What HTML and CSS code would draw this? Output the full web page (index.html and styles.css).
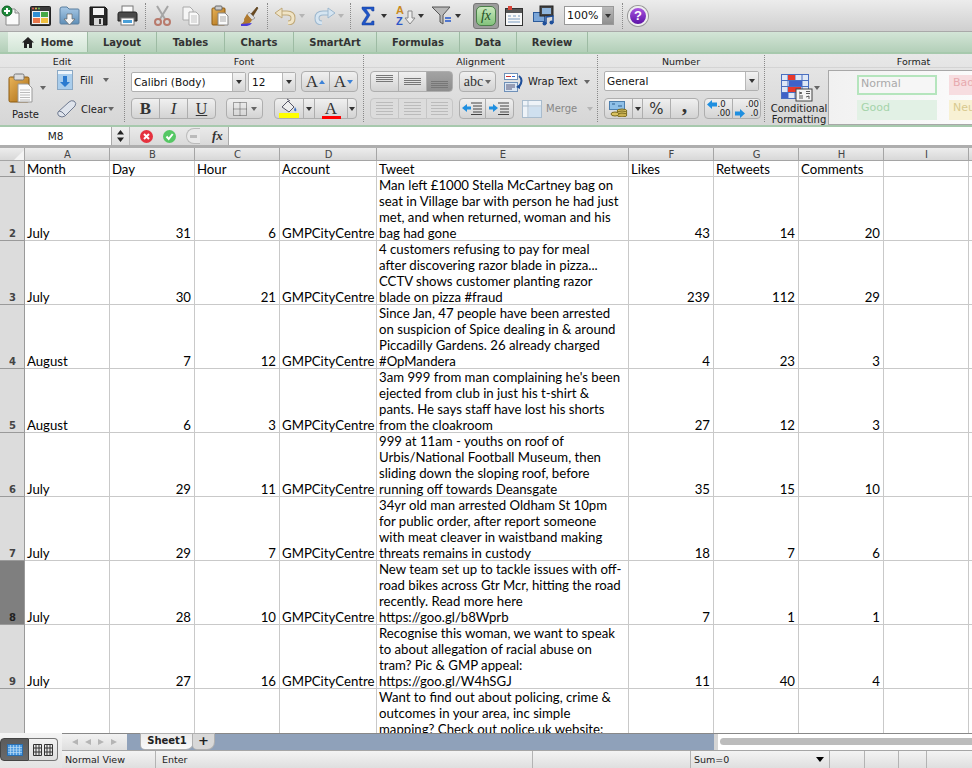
FILE: index.html
```html
<!DOCTYPE html>
<html lang="en">
<head>
<meta charset="utf-8">
<title>Sheet1</title>
<link rel="stylesheet" href="styles.css">
</head>
<body>
<svg class="defs" aria-hidden="true"><defs>
<linearGradient id="gClip" x1="0" y1="0" x2="1" y2="1"><stop offset="0" stop-color="#e9b45a"/><stop offset="1" stop-color="#a86a12"/></linearGradient>
<linearGradient id="gBlue" x1="0" y1="0" x2="0" y2="1"><stop offset="0" stop-color="#a9c9e6"/><stop offset="1" stop-color="#5f8fb8"/></linearGradient>
</defs></svg>
<div class="app">
  <div class="toolbar">
    <svg width="20" height="22" viewBox="0 0 20 22"><path d="M5 4h9l4 4v12H5z" fill="#fafafa" stroke="#8a8a8a"/><path d="M14 4v4h4" fill="#ddd" stroke="#8a8a8a"/><circle cx="6" cy="6" r="5" fill="#1d8a3a" stroke="#0f5e23"/><path d="M6 3v6M3 6h6" stroke="#fff" stroke-width="2"/></svg>
    <svg width="21" height="20" viewBox="0 0 21 20"><rect x="0.5" y="0.5" width="20" height="19" rx="1" fill="#3b3b3b" stroke="#222"/><circle cx="3" cy="2.5" r="1" fill="#e2574c"/><circle cx="6" cy="2.5" r="1" fill="#e6c34c"/><circle cx="9" cy="2.5" r="1" fill="#6bbf59"/><rect x="2" y="5" width="17" height="13" fill="#f1f1f1"/><rect x="3" y="6" width="7" height="5" fill="#2f8fd3"/><rect x="11" y="6" width="7" height="5" fill="#46a846"/><rect x="3" y="12" width="7" height="5" fill="#e9774a"/><rect x="11" y="12" width="7" height="5" fill="#f0c040"/></svg>
    <svg width="21" height="22" viewBox="0 0 21 22"><path d="M1 4q0-2 2-2h5l2 2h9q1 0 1 1v13q0 1-1 1H2q-1 0-1-1z" fill="url(#gBlue)" stroke="#5b7f9f"/><path d="M8 9h5v5h3l-5.500 6-5.500-6h3z" fill="#f4f4f4" stroke="#666" stroke-width=".7"/></svg>
    <svg width="19" height="20" viewBox="0 0 19 20"><path d="M1 1h15l2 2v16H1z" fill="#2a2a2a" stroke="#111"/><rect x="4" y="2" width="11" height="7" fill="#f4f4f4"/><rect x="5" y="12" width="9" height="7" fill="#d8d8d8"/><rect x="10" y="13" width="2" height="5" fill="#333"/></svg>
    <svg width="21" height="21" viewBox="0 0 21 21"><rect x="5" y="1" width="11" height="8" fill="#fbfbfb" stroke="#777"/><path d="M1 9q0-2 2-2h15q2 0 2 2v7H1z" fill="#4a4a4a" stroke="#222"/><rect x="4" y="13" width="13" height="7" fill="#fff" stroke="#777"/><rect x="6" y="15" width="9" height="3" fill="#4aa0d8"/></svg>
    <span class="tsep"></span>
    <svg width="19" height="22" viewBox="0 0 19 22"><path d="M4 1l8 13M15 1L7 14" stroke="#a5a5a5" stroke-width="2" fill="none"/><circle cx="5" cy="17" r="3" fill="none" stroke="#b87a6c" stroke-width="2"/><circle cx="14" cy="17" r="3" fill="none" stroke="#b87a6c" stroke-width="2"/></svg>
    <svg width="18" height="20" viewBox="0 0 18 20"><path d="M1 1h7l3 3v10H1z" fill="#f5f5f5" stroke="#aaa"/><path d="M7 6h7l3 3v10H7z" fill="#fafafa" stroke="#aaa"/><path d="M9 10h6M9 12h6M9 14h6M9 16h6" stroke="#c4c4c4"/></svg>
    <svg width="18" height="21" viewBox="0 0 18 21"><rect x="1" y="3" width="13" height="17" rx="1" fill="url(#gClip)" stroke="#8b5a12"/><rect x="4" y="1" width="7" height="4" rx="1" fill="#ccc" stroke="#666"/><path d="M7 8h7l3 3v9H7z" fill="#fafafa" stroke="#888"/><path d="M9 12h6M9 14h6M9 16h6" stroke="#aaa"/></svg>
    <svg width="19" height="22" viewBox="0 0 19 22"><path d="M11 9l6-7 1 1-5 8z" fill="#6b4a1f" stroke="#4b3310" stroke-width=".6"/><path d="M9 7l6 6-3 2-5-5z" fill="#ddd" stroke="#777" stroke-width=".6"/><path d="M7 9l5 6q-2 4-5 4H1q4-2 3-5z" fill="#b07a2e"/><path d="M1 19l11-1q-2 3-5 3H1z" fill="#4a3bd8"/></svg>
    <span class="tsep"></span>
    <svg width="22" height="18" viewBox="0 0 22 18"><path d="M6 6h7q6 0 6 5t-5 5" fill="none" stroke="#bfa878" stroke-width="5"/><path d="M6 6h7q6 0 6 5t-5 5" fill="none" stroke="#f0e4c6" stroke-width="3"/><path d="M1 6l7-5v10z" fill="#f0e4c6" stroke="#bfa878"/></svg>
    <i class="caret pale"></i>
    <svg width="22" height="18" viewBox="0 0 22 18"><path d="M16 6H9q-6 0-6 5t5 5" fill="none" stroke="#9db8cf" stroke-width="5"/><path d="M16 6H9q-6 0-6 5t5 5" fill="none" stroke="#d6e5f1" stroke-width="3"/><path d="M21 6l-7-5v10z" fill="#d6e5f1" stroke="#9db8cf"/></svg>
    <i class="caret pale"></i>
    <span class="tsep"></span>
    <svg width="14" height="20" viewBox="0 0 14 20"><path d="M1 1h12v4h-2l-1-2H5l4 6-5 8h6l1-2h2v4H1v-2l5-8-5-6z" fill="#1f55c8" stroke="#153d96" stroke-width=".5"/></svg>
    <i class="caret"></i>
    <svg width="23" height="21" viewBox="0 0 23 21"><text x="3" y="9" class="azA">A</text><text x="3" y="20" class="azZ">Z</text><path d="M15 6h4v7h3l-5 6-5-6h3z" fill="#eee" stroke="#888"/></svg>
    <i class="caret"></i>
    <svg width="21" height="19" viewBox="0 0 21 19"><path d="M1 1h18l-7 8v9l-3-2V9z" fill="#b9b9b9" stroke="#555"/><path d="M14 12h6M14 15h6" stroke="#2255cc" stroke-width="1.500"/></svg>
    <i class="caret"></i>
    <span class="fxbtn"><span class="fxin">fx</span></span>
    <svg width="18" height="20" viewBox="0 0 18 20"><rect x=".5" y="2.500" width="17" height="17" fill="#f8f8f8" stroke="#333"/><rect x="1" y="3" width="16" height="4" fill="#555"/><rect x="3" y="0" width="4" height="4" fill="#d9453a"/><path d="M3 10h3M8 10h3M13 10h2M3 13h12M3 16h12" stroke="#7a9cc0"/></svg>
    <svg width="23" height="21" viewBox="0 0 23 21"><rect x="0.500" y="7.500" width="11" height="9" fill="#7ba6d8" stroke="#2b5a9a"/><rect x="7" y="1" width="13" height="10" fill="#444" stroke="#222"/><rect x="9" y="3" width="9" height="6" fill="#8fb6de"/><path d="M13 19V12l7-1v7" fill="none" stroke="#1f4f9a" stroke-width="1.500"/><circle cx="11.500" cy="18.500" r="2" fill="#1f4f9a"/><circle cx="18.500" cy="17.500" r="2" fill="#1f4f9a"/></svg>
    <span class="zoombox"><span class="zoomval">100%</span><span class="zoomarr"><i class="caret"></i></span></span>
    <span class="tsep"></span>
    <span class="help">?</span>
  </div>

  <div class="tabs">
    <span class="tab t-home"><svg width="12" height="11" viewBox="0 0 12 11"><path d="M6 0l6 5.500h-2V11H7V7H5v4H2V5.500H0z" fill="#222"/></svg>Home</span>
    <span class="tab t-layout">Layout</span>
    <span class="tab t-tables">Tables</span>
    <span class="tab t-charts">Charts</span>
    <span class="tab t-art">SmartArt</span>
    <span class="tab t-form">Formulas</span>
    <span class="tab t-data">Data</span>
    <span class="tab t-review">Review</span>
  </div>

  <div class="ribbon">
    <section class="group g-edit">
      <h2>Edit</h2>
      <div class="gbody">
        <div class="paste">
          <div class="paste-top">
            <svg width="25" height="30" viewBox="0 0 25 30"><rect x="1" y="4" width="20" height="25" rx="1.500" fill="url(#gClip)" stroke="#8b5a12"/><rect x="6" y="1" width="10" height="6" rx="1.500" fill="#ddd" stroke="#777"/><path d="M10 11h10l4 4v14H10z" fill="#fbfbfb" stroke="#999"/><path d="M12 17h10M12 19.500h10M12 22h10M12 24.500h10M12 27h10" stroke="#bbb"/></svg>
            <i class="caret gr"></i>
          </div>
          <span class="lab">Paste</span>
        </div>
        <div class="edit-col">
          <div class="edit-row"><svg width="16" height="20" viewBox="0 0 16 20"><rect x=".5" y=".5" width="15" height="19" fill="#eef5fb" stroke="#8aa8c4"/><rect x="1" y="4" width="14" height="15" fill="#a9cdec"/><path d="M6 6h4v6h3l-5 5-5-5h3z" fill="#2b7bd0"/></svg><span class="lab fill-lab">Fill</span><i class="caret gr"></i></div>
          <div class="edit-row"><svg width="20" height="18" viewBox="0 0 20 18"><path d="M1 12L12 2q2-2 5-1 3 2 1 5L8 16q-3 2-6 0-2-2-1-4z" fill="#dfe4ec" stroke="#6f7a90"/><path d="M2 11q3 0 6 4" fill="none" stroke="#6f7a90"/></svg><span class="lab clear-lab">Clear</span><i class="caret gr"></i></div>
        </div>
      </div>
    </section>

    <section class="group g-font">
      <h2>Font</h2>
      <div class="gbody col">
        <div class="line">
          <span class="combo c-font"><span class="ctext">Calibri (Body)</span><span class="carr"><i class="caret"></i></span></span>
          <span class="combo c-size"><span class="ctext">12</span><span class="carr"><i class="caret"></i></span></span>
          <span class="btns b-grow"><span class="btn w28 ser big">A<i class="up"></i></span><span class="btn w28 ser small">A<i class="down"></i></span></span>
        </div>
        <div class="line line2">
          <span class="btns"><span class="btn w28 ser bold">B</span><span class="btn w28 ser ital">I</span><span class="btn w28 ser under">U</span></span>
          <span class="btns b-border"><span class="btn w37"><svg width="14" height="14" viewBox="0 0 14 14"><path d="M.5.5h13v13H.5zM7 .5v13M.5 7h13" fill="none" stroke="#555" stroke-dasharray="1 1"/></svg><i class="caret gr"></i></span></span>
          <span class="btns b-color">
            <span class="btn w30"><svg width="20" height="21" viewBox="0 0 20 21"><path d="M3 9l6-6 6 6-5 5z" fill="#eee" stroke="#556"/><path d="M8 1l3 2" stroke="#556"/><path d="M16 9q2 3 1 4t-2-1z" fill="#3a6fc4"/><rect x="0" y="15" width="20" height="5" fill="#ffff00"/></svg></span><span class="btn w11"><i class="caret"></i></span><span class="btn w33"><span class="acolor ser">A</span></span><span class="btn w9"><i class="caret"></i></span>
          </span>
        </div>
      </div>
    </section>

    <section class="group g-align">
      <h2>Alignment</h2>
      <div class="gbody col">
        <div class="line">
          <span class="btns"><span class="btn w28"><span class="lines top"></span></span><span class="btn w28"><span class="lines"></span></span><span class="btn w27 sel"><span class="lines bot"></span></span></span>
          <span class="btns b-abc"><span class="btn w37 ser abc">abc<i class="caret gr"></i></span></span>
          <svg class="wrap-ic" width="20" height="20" viewBox="0 0 20 20"><rect x=".5" y="1.500" width="13" height="6" fill="#fff" stroke="#6f90b8"/><path d="M2 4.500h5" stroke="#c33"/><path d="M8 4.500h3" stroke="#36c"/><rect x=".5" y="10.500" width="13" height="9" fill="#dbe7f4" stroke="#6f90b8"/><path d="M2 13h9M2 15h9M2 17h6" stroke="#557"/><path d="M15 4q5 4 0 11" fill="none" stroke="#1f4f9a" stroke-width="2"/><path d="M12 15l4-3v5z" fill="#1f4f9a"/></svg>
          <span class="lab wrap-lab">Wrap Text</span><i class="caret gr"></i>
        </div>
        <div class="line line2">
          <span class="btns faded"><span class="btn w28"><span class="lines al"></span></span><span class="btn w28"><span class="lines ac"></span></span><span class="btn w27"><span class="lines ar"></span></span></span>
          <span class="btns b-abc">
            <span class="btn w27"><svg width="21" height="13" viewBox="0 0 21 13"><path d="M9 1h11M11 4h9M11 7h9M11 10h9M9 12.500h11" stroke="#444"/><path d="M0 6l5-4v2.500h4v3H5V10z" fill="#1f8fe0"/></svg></span><span class="btn w28"><svg width="21" height="13" viewBox="0 0 21 13"><path d="M9 1h11M11 4h9M11 7h9M11 10h9M9 12.500h11" stroke="#444"/><path d="M9 6L4 2v2.500H0v3h4V10z" fill="#1f8fe0"/></svg></span>
          </span>
          <svg class="merge-ic" width="20" height="18" viewBox="0 0 20 18"><rect x=".5" y=".5" width="19" height="17" fill="#eef3f8" stroke="#a9bccd"/><path d="M6 .5v17M.5 6h19" stroke="#a9bccd"/><rect x="7" y="7" width="12" height="10" fill="#cfe0ef"/></svg>
          <span class="lab merge-lab">Merge</span><i class="caret pale"></i>
        </div>
      </div>
    </section>

    <section class="group g-num">
      <h2>Number</h2>
      <div class="gbody col">
        <div class="line">
          <span class="combo c-num"><span class="ctext">General</span><span class="carr"><i class="caret"></i></span></span>
        </div>
        <div class="line line2">
          <span class="btns"><span class="btn w28"><svg width="20" height="17" viewBox="0 0 20 17"><rect x=".5" y="1.500" width="15" height="8" fill="#8fc0e8" stroke="#4d7fae"/><path d="M3 4h3M9 6h4" stroke="#2d5f8e"/><ellipse cx="13" cy="11" rx="5" ry="2" fill="#d9c260" stroke="#7a6a20"/><ellipse cx="13" cy="13" rx="5" ry="2" fill="#d9c260" stroke="#7a6a20"/><ellipse cx="13" cy="15" rx="5" ry="2" fill="#c9b050" stroke="#7a6a20"/><ellipse cx="6" cy="14" rx="4" ry="2" fill="#d9c260" stroke="#7a6a20"/></svg></span><span class="btn w10"><i class="caret"></i></span><span class="btn w28 pct">%</span><span class="btn w28 comma ser">,</span></span>
          <span class="btns b-dec"><span class="btn w28 dec"><svg width="10" height="9" viewBox="0 0 10 9"><path d="M0 4.500L5 0v2.500h5v4H5V9z" fill="#1f8fe0"/></svg><span class="d1">.0</span><span class="d2">.00</span></span><span class="btn w28 dec"><span class="d0"></span><span class="d1">.00</span><svg class="d3" width="10" height="9" viewBox="0 0 10 9"><path d="M10 4.500L5 0v2.500H0v4h5V9z" fill="#1f8fe0"/></svg><span class="d2">.0</span></span></span>
        </div>
      </div>
    </section>

    <section class="group g-fmt">
      <h2>Format</h2>
      <div class="gbody fmt">
        <div class="cond">
          <div class="cond-top">
            <svg width="32" height="28" viewBox="0 0 32 28"><rect x=".5" y=".5" width="27" height="24" fill="#dfe8f6" stroke="#4a6fc0"/><path d="M7 .5v24M14 .5v24M21 .5v24M.5 6.500h27M.5 12.500h27M.5 18.500h27" stroke="#4a6fc0"/><rect x="7" y="1" width="7" height="5" fill="#e8392c"/><rect x="8" y="7" width="13" height="5" fill="#3f62c8"/><rect x="7" y="13" width="13" height="5" fill="#e8392c"/><rect x="1" y="19" width="6" height="5" fill="#3f62c8"/><rect x="15" y="15" width="16" height="12" fill="#f4f4f4" stroke="#444"/><path d="M18 18l3 1-3 1M25 17.500h4M25 19.500h4M18 22h4M18 24h4M25 23l3-1 0 3" fill="none" stroke="#333" stroke-width=".8"/></svg>
            <i class="caret gr"></i>
          </div>
          <span class="lab lab-c">Conditional<br>Formatting</span>
        </div>
        <div class="styles">
          <div class="stylecol">
            <span class="sty s-normal">Normal</span>
            <span class="sty s-good">Good</span>
          </div>
          <div class="stylecol">
            <span class="sty s-bad">Bad</span>
            <span class="sty s-neutral">Neutral</span>
          </div>
        </div>
      </div>
    </section>
  </div>

  <div class="fbar">
    <span class="namebox">M8</span>
    <span class="stepper"><svg width="7" height="12" viewBox="0 0 7 12"><path d="M3.500 0L7 4.500H0zM3.500 12L0 7.500h7z" fill="#222"/></svg></span>
    <span class="ficons">
      <svg width="13" height="13" viewBox="0 0 13 13"><circle cx="6.500" cy="6.500" r="6.500" fill="#e5323f"/><path d="M4 4l5 5M9 4l-5 5" stroke="#fff" stroke-width="2"/></svg>
      <svg width="13" height="13" viewBox="0 0 13 13"><circle cx="6.500" cy="6.500" r="6.500" fill="#55c764"/><path d="M3.500 6.500l2.200 2.500 4-5" stroke="#fff" stroke-width="2" fill="none"/></svg>
      <span class="fminus"><i></i></span>
      <span class="fx ser">fx</span>
    </span>
    <span class="finput"></span>
  </div>

  <div class="sheetwrap">
    <table class="sheet">
      <colgroup><col class="c0"><col class="c85"><col class="c85"><col class="c85"><col class="c97"><col class="c252"><col class="c85"><col class="c85"><col class="c85"><col class="c85"><col class="c85"></colgroup>
      <thead><tr class="rh"><th class="corner"><i></i></th><th>A</th><th>B</th><th>C</th><th>D</th><th>E</th><th>F</th><th>G</th><th>H</th><th>I</th><th></th></tr></thead>
      <tbody>
        <tr class="r1"><th>1</th><td>Month</td><td>Day</td><td>Hour</td><td>Account</td><td>Tweet</td><td>Likes</td><td>Retweets</td><td>Comments</td><td></td><td></td></tr>
        <tr><th>2</th><td>July</td><td class="n">31</td><td class="n">6</td><td>GMPCityCentre</td><td>Man left £1000 Stella McCartney bag on<br>seat in Village bar with person he had just<br>met, and when returned, woman and his<br>bag had gone</td><td class="n">43</td><td class="n">14</td><td class="n">20</td><td></td><td></td></tr>
        <tr><th>3</th><td>July</td><td class="n">30</td><td class="n">21</td><td>GMPCityCentre</td><td>4 customers refusing to pay for meal<br>after discovering razor blade in pizza...<br>CCTV shows customer planting razor<br>blade on pizza #fraud</td><td class="n">239</td><td class="n">112</td><td class="n">29</td><td></td><td></td></tr>
        <tr><th>4</th><td>August</td><td class="n">7</td><td class="n">12</td><td>GMPCityCentre</td><td>Since Jan, 47 people have been arrested<br>on suspicion of Spice dealing in &amp; around<br>Piccadilly Gardens. 26 already charged<br>#OpMandera</td><td class="n">4</td><td class="n">23</td><td class="n">3</td><td></td><td></td></tr>
        <tr><th>5</th><td>August</td><td class="n">6</td><td class="n">3</td><td>GMPCityCentre</td><td>3am 999 from man complaining he's been<br>ejected from club in just his t-shirt &amp;<br>pants. He says staff have lost his shorts<br>from the cloakroom</td><td class="n">27</td><td class="n">12</td><td class="n">3</td><td></td><td></td></tr>
        <tr><th>6</th><td>July</td><td class="n">29</td><td class="n">11</td><td>GMPCityCentre</td><td>999 at 11am - youths on roof of<br>Urbis/National Football Museum, then<br>sliding down the sloping roof, before<br>running off towards Deansgate</td><td class="n">35</td><td class="n">15</td><td class="n">10</td><td></td><td></td></tr>
        <tr><th>7</th><td>July</td><td class="n">29</td><td class="n">7</td><td>GMPCityCentre</td><td>34yr old man arrested Oldham St 10pm<br>for public order, after report someone<br>with meat cleaver in waistband making<br>threats remains in custody</td><td class="n">18</td><td class="n">7</td><td class="n">6</td><td></td><td></td></tr>
        <tr class="active"><th>8</th><td>July</td><td class="n">28</td><td class="n">10</td><td>GMPCityCentre</td><td>New team set up to tackle issues with off-<br>road bikes across Gtr Mcr, hitting the road<br>recently. Read more here<br>https://goo.gl/b8Wprb</td><td class="n">7</td><td class="n">1</td><td class="n">1</td><td></td><td></td></tr>
        <tr><th>9</th><td>July</td><td class="n">27</td><td class="n">16</td><td>GMPCityCentre</td><td>Recognise this woman, we want to speak<br>to about allegation of racial abuse on<br>tram? Pic &amp; GMP appeal:<br>https://goo.gl/W4hSGJ</td><td class="n">11</td><td class="n">40</td><td class="n">4</td><td></td><td></td></tr>
        <tr class="clip"><th></th><td></td><td></td><td></td><td></td><td>Want to find out about policing, crime &amp;<br>outcomes in your area, inc simple<br>mapping? Check out police.uk website:</td><td></td><td></td><td></td><td></td><td></td></tr>
      </tbody>
    </table>
  </div>

  <div class="bottom">
    <div class="views">
      <span class="vbtn on"><svg width="16" height="12" viewBox="0 0 16 12"><rect x=".5" y=".5" width="15" height="11" fill="#4f9be0" stroke="#2a6fb0"/><path d="M3.500 1v10M6.500 1v10M9.500 1v10M12.500 1v10M1 3.500h14M1 6h14M1 8.500h14" stroke="#bcdcf5" stroke-width=".7"/></svg></span>
      <span class="vbtn"><svg width="20" height="12" viewBox="0 0 20 12"><path d="M.5.5h8v11h-8zM11.500.5h8v11h-8zM3 1v10M6 1v10M1 4h7M1 8h7M14 1v10M17 1v10M12 4h7M12 8h7" fill="none" stroke="#333"/></svg></span>
    </div>
    <div class="bot-right">
      <div class="tabbar">
        <span class="nav"><i class="n1"></i><i class="n2"></i><i class="n3"></i><i class="n4"></i></span>
        <span class="band"><span class="stab">Sheet1</span><span class="stab plus">+</span></span>
        <span class="grip"></span>
        <span class="hscroll"><i></i></span>
      </div>
      <div class="status">
        <span class="st st-a">Normal View</span>
        <span class="st st-b">Enter</span>
        <span class="st st-c"></span>
        <span class="st st-d">Sum=0<i class="caret blk"></i></span>
        <span class="st st-e"></span>
        <span class="st st-f"></span>
        <span class="st st-g"></span>
        <span class="st st-h"></span>
      </div>
    </div>
  </div>
</div>
</body>
</html>
```
FILE: styles.css
```css
* { box-sizing: border-box; }
html, body { margin: 0; padding: 0; background: #fff; }
body { font-family: "DejaVu Sans", sans-serif; font-size: 10px; color: #222; overflow: hidden; }
.defs { display: block; width: 0; height: 0; }
.app { width: 972px; height: 768px; display: flex; flex-direction: column; overflow: hidden; }
.ser { font-family: "Liberation Serif", serif; }

.caret { display: inline-block; width: 0; height: 0; border-left: 3.5px solid transparent; border-right: 3.5px solid transparent; border-top: 4px solid #333; flex: none; }
.caret.gr { border-top-color: #666; }
.caret.pale { border-top-color: #b5b5b5; }
.caret.blk { border-left-width: 4.5px; border-right-width: 4.5px; border-top: 5px solid #000; }

/* toolbar: every item keeps its own lead-in gap */
.toolbar { height: 32px; flex: none; background: linear-gradient(#ececec, #cfcfcf); border-bottom: 1px solid #a9a9a9; display: flex; align-items: center; }
.toolbar > * { flex: none; }
.toolbar > :nth-child(1) { margin-left: 1px; }
.toolbar > :nth-child(2) { margin-left: 9px; }
.toolbar > :nth-child(3) { margin-left: 8px; }
.toolbar > :nth-child(4) { margin-left: 9px; }
.toolbar > :nth-child(5) { margin-left: 9px; }
.toolbar > :nth-child(6) { margin-left: 7px; }
.toolbar > :nth-child(7) { margin-left: 7px; }
.toolbar > :nth-child(8) { margin-left: 10px; }
.toolbar > :nth-child(9) { margin-left: 11px; }
.toolbar > :nth-child(10) { margin-left: 11px; }
.toolbar > :nth-child(11) { margin-left: 8px; }
.toolbar > :nth-child(12) { margin-left: 6px; }
.toolbar > :nth-child(13) { margin-left: 3px; }
.toolbar > :nth-child(14) { margin-left: 9px; }
.toolbar > :nth-child(15) { margin-left: 2px; }
.toolbar > :nth-child(16) { margin-left: 6px; }
.toolbar > :nth-child(17) { margin-left: 10px; }
.toolbar > :nth-child(18) { margin-left: 6px; }
.toolbar > :nth-child(19) { margin-left: 6px; }
.toolbar > :nth-child(20) { margin-left: 2px; }
.toolbar > :nth-child(21) { margin-left: 7px; }
.toolbar > :nth-child(22) { margin-left: 3px; }
.toolbar > :nth-child(23) { margin-left: 12px; }
.toolbar > :nth-child(24) { margin-left: 6px; }
.toolbar > :nth-child(25) { margin-left: 10px; }
.toolbar > :nth-child(26) { margin-left: 8px; }
.toolbar > :nth-child(27) { margin-left: 8px; }
.toolbar > :nth-child(28) { margin-left: 5px; }
.tsep { width: 1px; height: 26px; border-left: 1px dotted #8a8a8a; }
.azA { font: bold 11px "Liberation Sans", sans-serif; fill: #c98a1e; }
.azZ { font: bold 11px "Liberation Sans", sans-serif; fill: #2b55c8; }
.fxbtn { width: 26px; height: 26px; background: #9d9d9d; border: 1px solid #777; border-radius: 3px; display: flex; align-items: center; justify-content: center; }
.fxin { width: 20px; height: 20px; border-radius: 5px; background: linear-gradient(#c9e8bd, #83c37c); border: 1px solid #4b7f4a; font: italic 14px/18px "Liberation Serif", serif; text-align: center; color: #244f24; }
.zoombox { width: 50px; height: 19px; display: flex; border: 1px solid #999; background: #fff; }
.zoomval { flex: 1; font-size: 11px; line-height: 17px; padding-left: 2px; color: #111; }
.zoomarr { width: 11px; background: linear-gradient(#bbb, #8f8f8f); display: flex; align-items: center; justify-content: center; }
.help { width: 20px; height: 20px; border-radius: 50%; background: linear-gradient(#a855e0, #5d12a6); border: 2px solid #eee; box-shadow: 0 0 0 1px #999; color: #fff; font: bold 13px/16px "Liberation Sans", sans-serif; text-align: center; }

/* tabs */
.tabs { height: 20px; flex: none; display: flex; padding-left: 8px; background: linear-gradient(#d3e5d7, #b3cfb8); }
.tab { border-right: 1px solid #9dbba3; font-weight: bold; font-size: 10px; color: #333; display: flex; align-items: center; justify-content: center; gap: 7px; }
.t-home { width: 80px; background: linear-gradient(#edf5ee, #d2e5d6); }
.t-layout { width: 69px; }
.t-tables { width: 68px; }
.t-charts { width: 69px; }
.t-art { width: 83px; }
.t-form { width: 83px; }
.t-data { width: 57px; }
.t-review { width: 71px; }

/* ribbon */
.ribbon { height: 75px; flex: none; display: flex; background: linear-gradient(#e8e8e8, #d6d6d6); border-top: 2px solid #a7c9ad; border-bottom: 2px solid #a7c9ad; }
.group { border-right: 1px dotted #888; padding: 0; display: flex; flex-direction: column; margin: 1px 0 3px; }
.group h2 { margin: 0; height: 13px; flex: none; font-size: 9.500px; line-height: 13px; font-weight: normal; text-align: center; color: #222; border-bottom: 1px solid #d4d4d4; }
.g-edit { width: 125px; }
.g-font { width: 239px; }
.g-align { width: 234px; }
.g-num { width: 167px; }
.g-fmt { width: 207px; border-right: 0; }
.g-fmt h2 { padding-left: 90px; }
.gbody { flex: 1; display: flex; }
.gbody.col { flex-direction: column; padding: 3px 0 0 6px; }
.lab { font-size: 10px; color: #222; white-space: nowrap; }

.paste { width: 52px; padding: 4px 0 0 8px; display: flex; flex-direction: column; }
.paste-top { display: flex; align-items: center; gap: 7px; height: 32px; }
.paste .lab { margin: 5px 0 0 4px; }
.edit-col { display: flex; flex-direction: column; gap: 9px; padding: 2px 0 0 5px; }
.edit-row { display: flex; align-items: center; height: 20px; width: 60px; }
.fill-lab { margin-left: 7px; width: 23px; }
.clear-lab { margin-left: 4px; width: 29px; }
.edit-row svg:first-child { flex: none; }
.edit-row:nth-child(2) .caret { margin-left: -2px; }

.line { display: flex; align-items: center; height: 21px; }
.line2 { margin-top: 6px; }
.combo { display: flex; height: 20px; background: #fff; border: 1px solid #b0b0b0; border-radius: 2px; }
.ctext { flex: 1; font-size: 10.500px; line-height: 18px; padding-left: 2px; color: #111; white-space: nowrap; }
.carr { width: 13px; background: linear-gradient(#f2f2f2, #d5d5d5); border-left: 1px solid #b8b8b8; display: flex; align-items: center; justify-content: center; }
.c-font { width: 115px; }
.c-size { width: 48px; margin-left: 2px; }
.c-size .ctext { padding-left: 3px; }
.c-num { width: 155px; margin-top: -1px; }
.btns { display: flex; height: 21px; }
.b-grow { margin-left: 5px; }
.b-border { margin-left: 10px; }
.b-color { margin-left: 11px; }
.b-abc { margin-left: 6px; }
.b-dec { margin-left: 5px; }
.btn { height: 21px; display: flex; align-items: center; justify-content: center; background: linear-gradient(#f0f0f0, #d3d3d3); border: 1px solid #aeaeae; margin-left: -1px; color: #333; }
.btns .btn:first-child { margin-left: 0; border-radius: 4px 0 0 4px; }
.btns .btn:last-child { border-radius: 0 4px 4px 0; }
.btns .btn:only-child { border-radius: 4px; }
.w9 { width: 10px; }
.w10 { width: 11px; }
.w11 { width: 12px; }
.w27 { width: 27px; }
.w28 { width: 29px; }
.w30 { width: 30px; }
.w33 { width: 34px; }
.w37 { width: 37px; gap: 4px; }
.big { font-size: 17px; }
.small { font-size: 17px; }
.up { width: 0; height: 0; border-left: 3.5px solid transparent; border-right: 3.5px solid transparent; border-bottom: 4px solid #3b82d8; margin-left: 1px; }
.down { width: 0; height: 0; border-left: 3.5px solid transparent; border-right: 3.5px solid transparent; border-top: 4px solid #3b82d8; margin-left: 1px; }
.bold { font-weight: bold; font-size: 17px; }
.ital { font-style: italic; font-size: 17px; }
.under { text-decoration: underline; font-size: 16px; }
.acolor { font-size: 17px; line-height: 15px; border-bottom: 3px solid #f00; width: 19px; text-align: center; color: #333; margin-top: 2px; }
.lines { width: 17px; height: 13px; display: block; background: repeating-linear-gradient(#777 0 1px, transparent 1px 2px); background-size: 100% 7px; background-repeat: no-repeat; background-position: 0 50%; }
.lines.top { background-position: 0 0; }
.lines.bot { background-position: 0 100%; }
.sel { background: linear-gradient(#a3a3a3, #8d8d8d); }
.faded .btn { background: #dcdcdc; border-color: #c6c6c6; }
.lines.al, .lines.ac, .lines.ar { background: repeating-linear-gradient(#bbb 0 1px, transparent 1px 3px); background-size: 100% 13px; }
.abc { font-size: 14px; gap: 2px; }
.wrap-ic { margin-left: 8px; flex: none; }
.wrap-lab { margin-left: 4px; width: 56px; }
.merge-ic { margin-left: 8px; flex: none; }
.merge-lab { margin-left: 4px; width: 41px; color: #888; }
.pct { font-size: 15px; color: #333; }
.comma { font-size: 22px; font-weight: bold; padding-bottom: 8px; }
.dec { display: grid; grid-template-columns: 11px 13px; grid-template-rows: 9px 9px; font-size: 8.500px; line-height: 9px; color: #222; justify-items: start; align-content: center; }
.dec .d1 { grid-row: 1; grid-column: 2; }
.dec .d2 { grid-row: 2; grid-column: 2; justify-self: end; }
.dec .d3 { grid-row: 2; grid-column: 1; }
.dec svg:first-child { grid-row: 1; grid-column: 1; }

.fmt { padding-left: 5px; }
.cond { width: 58px; display: flex; flex-direction: column; align-items: center; padding-top: 5px; }
.cond-top { display: flex; align-items: center; gap: 1px; height: 30px; padding-left: 2px; }
.lab-c { line-height: 11px; text-align: center; }
.styles { flex: 1; margin: 2px 0 0 0; background: linear-gradient(90deg, #f1f1f1, #fbfbfb); border: 1px solid #a8a8a8; border-right: 0; display: flex; padding: 4px 0 0 28px; gap: 12px; overflow: hidden; }
.stylecol { display: flex; flex-direction: column; gap: 5px; width: 80px; flex: none; }
.sty { height: 20px; font-size: 11px; line-height: 14px; padding-left: 4px; white-space: nowrap; }
.s-normal { border: 2px solid #b5e5bd; color: #a9a9a9; background: #f6f6f6; padding-left: 2px; }
.s-good { background: #e2f1e5; color: #a5d4aa; padding-top: 1px; }
.s-bad { background: #f7dde0; color: #e7a9ae; padding-top: 1px; }
.s-neutral { background: #f8f1d4; color: #d8c98f; padding-top: 1px; }

/* formula bar */
.fbar { height: 18px; flex: none; display: flex; background: #fff; }
.namebox { width: 111px; background: #fff; text-align: center; line-height: 18px; font-size: 10.500px; color: #222; }
.stepper { width: 18px; border-left: 1px solid #aaa; background: linear-gradient(#f0f0f0, #dedede); display: flex; align-items: center; justify-content: center; }
.ficons { width: 100px; background: linear-gradient(#eaeaea, #d9d9d9); border-left: 1px solid #bbb; border-right: 1px solid #aaa; display: flex; align-items: center; padding-left: 10px; gap: 10px; }
.fminus { width: 14px; height: 16px; border-radius: 8px 0 0 8px; border: 1px solid #bbb; border-right: 0; background: #e9e9e9; display: flex; align-items: center; justify-content: center; }
.fminus i { width: 7px; height: 3px; background: #bbb; }
.fx { font-style: italic; font-weight: bold; font-size: 13px; margin-left: 2px; color: #333; }
.finput { flex: 1; background: #fff; }

/* sheet */
.sheetwrap { height: 588px; flex: none; overflow: hidden; background: #fff; border-top: 3px solid #aeaeae; }
.sheet { border-collapse: separate; border-spacing: 0; table-layout: fixed; width: 1054px; font-family: "Lato", sans-serif; font-size: 13.200px; line-height: 16px; color: #000; }
.c0 { width: 25px; }
.c85 { width: 85px; }
.c97 { width: 97px; }
.c252 { width: 252px; }
.sheet td, .sheet th { padding: 0 2px; box-shadow: inset -1px -1px 0 #c9c9c9; overflow: hidden; height: 64px; vertical-align: bottom; text-align: left; font-weight: normal; white-space: nowrap; }
.sheet tbody th { background: #dcdcdc; text-align: center; font-family: "DejaVu Sans", sans-serif; font-size: 10px; font-weight: bold; color: #444; box-shadow: inset -1px -1px 0 #9a9a9a; padding: 0; line-height: 15px; }
.sheet td.n { text-align: right; padding-right: 4px; }
.rh th { height: 13px !important; background: linear-gradient(#ededed, #d6d6d6); text-align: center !important; font: 10px/12px "DejaVu Sans", sans-serif !important; color: #444; box-shadow: inset -1px -1px 0 #a5a5a5 !important; padding: 0 !important; vertical-align: middle !important; }
.corner i { display: block; margin: 0 1px 0 auto; width: 0; height: 0; border-bottom: 10px solid #f4f4f4; border-left: 10px solid transparent; }
.r1 td, .r1 th { height: 16px; }
.active th { background: #7f7f7f !important; color: #222 !important; }
.clip td { vertical-align: top; }

/* bottom */
.bottom { flex: 1; display: flex; min-height: 0; }
.views { width: 62px; background: linear-gradient(#f4f4f4, #e4e4e4); padding-top: 5px; display: flex; align-items: flex-start; }
.vbtn { width: 29px; height: 23px; display: flex; align-items: center; justify-content: center; background: linear-gradient(#f2f2f2, #dedede); border: 1px solid #777; border-left: 0; border-radius: 0 4px 4px 0; }
.vbtn.on { background: linear-gradient(#5b5b5b, #6a6a6a); border-radius: 4px 0 0 4px; border: 1px solid #444; }
.bot-right { flex: 1; display: flex; flex-direction: column; min-width: 0; }
.tabbar { height: 17px; display: flex; border-top: 1px solid #888; background: #fff; }
.nav { width: 65px; background: linear-gradient(#f2f2f2, #dedede); display: flex; align-items: center; justify-content: space-around; padding: 0 6px; }
.nav i { width: 0; height: 0; border-top: 3.5px solid transparent; border-bottom: 3.5px solid transparent; }
.n1, .n2 { border-right: 6px solid #b5b5b5; }
.n3, .n4 { border-left: 6px solid #b5b5b5; }
.band { width: 587px; background: #8fa1ba; display: flex; padding-left: 14px; }
.stab { width: 52px; height: 15px; background: linear-gradient(#ececec, #fafafa); border-radius: 0 0 7px 4px; text-align: center; font-weight: bold; font-size: 10px; line-height: 14px; color: #222; box-shadow: 0 0 0 1px #b0b0b0; }
.stab.plus { width: 21px; background: #d8d8d8; font-size: 13px; }
.grip { width: 4px; background: #d5d5d5; }
.hscroll { flex: 1; background: #fff; padding: 4px 0 0 2px; }
.hscroll i { display: block; height: 7px; border-radius: 4px 0 0 4px; background: #bcbcbc; }
.status { flex: 1; display: flex; background: linear-gradient(#f3f3f3, #dfdfdf); border-top: 1px solid #a5a5a5; }
.st { border-right: 1px solid #b3b3b3; font-size: 9.500px; line-height: 17px; padding-left: 3px; color: #222; white-space: nowrap; }
.st-a { width: 94px; }
.st-b { width: 377px; padding-left: 6px; }
.st-c { width: 158px; }
.st-d { width: 139px; display: flex; align-items: center; justify-content: space-between; padding-right: 5px; }
.st-e { width: 35px; }
.st-f { width: 34px; }
.st-g { width: 28px; }
.st-h { flex: 1; border-right: 0; }
```
